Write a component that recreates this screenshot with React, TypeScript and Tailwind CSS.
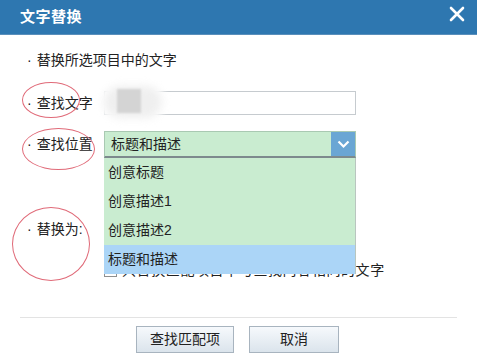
import React from "react";

const options = ["创意标题", "创意描述1", "创意描述2", "标题和描述"];

const App = () => {
  return (
    <div
      className="relative w-[477px] h-[355px] overflow-hidden bg-white text-[14px] text-[#222]"
      style={{ fontFamily: '"Liberation Sans", "Noto Sans CJK SC", sans-serif' }}
    >
      {/* title bar */}
      <div className="h-[35px] bg-[#2e77b0] flex items-center justify-between pl-[20px] pr-[12px] border-b border-[#5a8fbb]">
        <div className="text-white font-bold text-[15px] tracking-[0.5px]">文字替换</div>
        <svg width="16" height="16" viewBox="0 0 16 16" className="mt-[-6px]">
          <path d="M2 2 L14 14 M14 2 L2 14" stroke="white" strokeWidth="2.6" strokeLinecap="round" />
        </svg>
      </div>

      <div className="pl-[27px] pt-[15px]">
        <div className="h-[20px] flex items-center gap-[5px]">
          <span>·</span>替换所选项目中的文字
        </div>

        <div className="mt-[21px] h-[24px] flex items-center">
          <div className="w-[77px] flex gap-[5px]">
            <span>·</span>查找文字
          </div>
          <div className="w-[252px] h-[24px] border border-[#c6cbcf] bg-white" />
        </div>

        <div className="mt-[16px] h-[27px] flex items-center">
          <div className="w-[77px] flex gap-[5px]">
            <span>·</span>查找位置
          </div>
          <div className="w-[252px] h-[27px] flex bg-[#c9ecd0] border border-[#a9c9b2] border-b-2 border-b-[#7d8a8d]">
            <div className="flex-1 flex items-center pl-[6px]">标题和描述</div>
            <div className="w-[24px] bg-[#6aa6d4] flex items-center justify-center">
              <svg width="13" height="9" viewBox="0 0 13 9">
                <path d="M1.5 1.5 L6.5 6.5 L11.5 1.5" stroke="white" strokeWidth="2.2" fill="none" />
              </svg>
            </div>
          </div>
        </div>

        <div className="mt-[61px] h-[20px] flex items-center gap-[5px]">
          <span>·</span>替换为:
        </div>

        <div className="mt-[21px] h-[20px] flex items-center pl-[77px]">
          <div className="w-[13px] h-[13px] border border-[#8f8f8f] bg-white mr-[5px]" />
          <div className="tracking-[0.6px]">只替换匹配项目中与查找内容相同的文字</div>
        </div>
      </div>

      {/* footer */}
      <div className="mt-[37px] mx-[20px] h-px bg-[#e3e3e3]" />
      <div className="mt-[8px] flex pl-[136px] gap-[15px]">
        <button className="w-[98px] h-[27px] border border-[#a8b4bf] bg-gradient-to-b from-[#f6f9fc] to-[#dbe4ec] text-[14px] text-[#222]">
          查找匹配项
        </button>
        <button className="w-[90px] h-[27px] border border-[#a8b4bf] bg-gradient-to-b from-[#f6f9fc] to-[#dbe4ec] text-[14px] text-[#222]">
          取消
        </button>
      </div>

      {/* open dropdown list */}
      <div className="absolute left-[104px] top-[158px] w-[252px] bg-[#c9ecd0] border-r border-[#b9c6bf]">
        {options.map((o, i) => (
          <div
            key={o}
            className={
              i === 3
                ? "h-[29px] flex items-center pl-[4px] bg-[#abd5f7]"
                : "h-[29px] flex items-center pl-[4px]"
            }
          >
            {o}
          </div>
        ))}
      </div>

      {/* blurred mask over the input */}
      <div className="absolute left-[98px] top-[84px] w-[68px] h-[36px] rounded-full bg-white blur-[3px]" />
      <div className="absolute left-[104px] top-[86px] w-[58px] h-[32px] rounded-full bg-[#efefef] blur-[4px]" />
      <div className="absolute left-[117px] top-[89px] w-[24px] h-[24px] bg-[#d4d4d4] blur-[1px]" />

      {/* red annotation circles */}
      <div className="absolute left-[22px] top-[82px] w-[58px] h-[36px] rounded-[50%] border-[1.5px] border-[#e06a78]" />
      <div className="absolute left-[22px] top-[128px] w-[73px] h-[42px] rounded-[50%] border-[1.5px] border-[#e06a78]" />
      <div className="absolute left-[12px] top-[207px] w-[78px] h-[74px] rounded-[50%] border-[1.5px] border-[#e06a78]" />
    </div>
  );
};

export default App;
